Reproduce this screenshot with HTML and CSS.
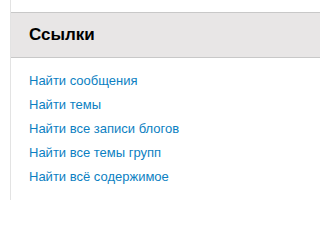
FILE: index.html
```html
<!DOCTYPE html>
<html>
<head>
<meta charset="utf-8">
<link rel="stylesheet" href="styles.css">
</head>
<body>
<div class="panel">
  <div class="head"><h2 class="title">Ссылки</h2></div>
  <ul class="links">
    <li><a href="#">Найти сообщения</a></li>
    <li><a href="#">Найти темы</a></li>
    <li><a href="#">Найти все записи блогов</a></li>
    <li><a href="#">Найти все темы групп</a></li>
    <li><a href="#">Найти всё содержимое</a></li>
  </ul>
</div>
</body>
</html>
```
FILE: styles.css
```css
html, body { margin: 0; padding: 0; background: #fff; }
body { font-family: "Liberation Sans", Arial, sans-serif; height: 200px; overflow: hidden; }
.panel {
  margin-left: 10px;
  border-left: 1px solid #e3e3e3;
  height: 200px;
  padding-top: 12px;
  box-sizing: border-box;
}
.head {
  background: #e8e6e6;
  border-top: 1px solid #c8c8c8;
  border-bottom: 1px solid #c8c8c8;
  height: 44px;
  display: flex;
  align-items: center;
  padding-left: 18px;
}
.title { margin: 0; font-size: 17px; font-weight: bold; color: #000; }
.links { list-style: none; margin: 0; padding: 11px 0 0 18px; }
.links li { height: 24px; line-height: 24px; font-size: 13px; }
.links a { color: #0c7fc2; text-decoration: none; }
```
